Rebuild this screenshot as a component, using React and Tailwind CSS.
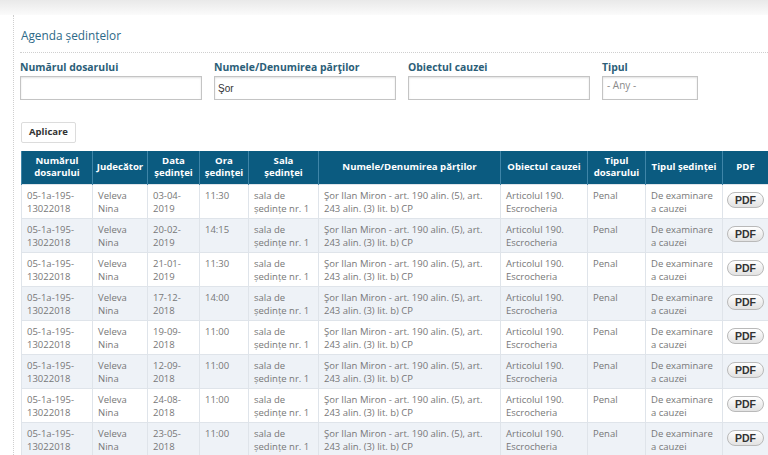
const rows = [
  ["03-04-", "2019", "11:30"],
  ["20-02-", "2019", "14:15"],
  ["21-01-", "2019", "11:30"],
  ["17-12-", "2018", "14:00"],
  ["19-09-", "2018", "11:00"],
  ["12-09-", "2018", "11:00"],
  ["24-08-", "2018", "11:00"],
  ["23-05-", "2018", "11:00"],
];

const headers = [
  ["Numărul", "dosarului"],
  ["Judecător"],
  ["Data", "ședinței"],
  ["Ora", "ședinței"],
  ["Sala", "ședinței"],
  ["Numele/Denumirea părților"],
  ["Obiectul cauzei"],
  ["Tipul", "dosarului"],
  ["Tipul ședinței"],
  ["PDF"],
];

const widths = [71, 55, 52, 49, 70, 182, 87, 58, 77, 46];

const Cell = ({ children }) => (
  <td className="border border-[#dfe4ea] align-top px-[5px] pt-[4px] text-[9.5px] leading-[13px] text-[#777]">
    {children}
  </td>
);

const Field = ({ label, value, width, muted }) => (
  <div className="flex flex-col" style={{ width }}>
    <label className="text-[10.4px] font-bold leading-[14px] text-[#2b5e78] mb-[2px]">{label}</label>
    <div className="h-[24px] border border-[#c4c4c4] bg-white shadow-[inset_0_1px_2px_rgba(0,0,0,0.12)] px-[3px]">
      {muted ? (
        <span className="block pt-[1px] pl-[1px] text-[10px] text-[#8a8a8a]">{value}</span>
      ) : (
        <span className="block pt-[4px] text-[10px] text-[#333] font-['Liberation_Sans',Arial,sans-serif]">{value}</span>
      )}
    </div>
  </div>
);

export default function App() {
  return (
    <div className="w-[768px] h-[455px] overflow-hidden bg-white font-['Open_Sans',sans-serif]">
      <div className="h-[15px] bg-gradient-to-b from-[#e9e9e9] to-[#fbfbfb]" />
      <div className="ml-[13px] border-l border-dotted border-[#cfcfcf] pl-[6px] h-[440px]">
        <h1 className="pt-[12px] pl-[1px] text-[11.8px] leading-[16px] text-[#2d6987]">Agenda ședințelor</h1>
        <div className="mt-[9px] border-t border-dotted border-[#cfcfcf]" />
        <div className="flex gap-[12px] pt-[7px]">
          <Field label="Numărul dosarului" value="" width={182} />
          <Field label="Numele/Denumirea părţilor" value="Şor" width={182} />
          <Field label="Obiectul cauzei" value="" width={182} />
          <Field label="Tipul" value="- Any -" width={96} muted />
        </div>
        <div className="pt-[22px] pl-[1px]">
          <button className="block h-[21px] w-[55px] rounded-[2px] border border-[#dcdcdc] bg-white text-[9.5px] font-bold text-[#333]">
            Aplicare
          </button>
        </div>
        <table className="mt-[8px] ml-[1px] table-fixed border-collapse" style={{ width: 747 }}>
          <colgroup>
            {widths.map((w, i) => (
              <col key={i} style={{ width: w }} />
            ))}
          </colgroup>
          <thead>
            <tr className="h-[33px] bg-[#0b5b80]">
              {headers.map((h, i) => (
                <th key={i} className="border-x border-[#3f85a8] text-center text-[9.6px] leading-[12px] font-bold text-white">
                  {h.map((line, j) => (
                    <div key={j}>{line}</div>
                  ))}
                </th>
              ))}
            </tr>
          </thead>
          <tbody>
            {rows.map((r, i) => (
              <tr key={i} className={`h-[34px] ${i % 2 === 1 ? "bg-[#eef2f7]" : "bg-white"}`}>
                <Cell>05-1a-195-<br />13022018</Cell>
                <Cell>Veleva<br />Nina</Cell>
                <Cell>{r[0]}<br />{r[1]}</Cell>
                <Cell>{r[2]}</Cell>
                <Cell>sala de<br />ședințe nr. 1</Cell>
                <Cell>Şor Ilan Miron - art. 190 alin. (5), art.<br />243 alin. (3) lit. b) CP</Cell>
                <Cell>Articolul 190.<br />Escrocheria</Cell>
                <Cell>Penal</Cell>
                <Cell>De examinare<br />a cauzei</Cell>
                <td className="border border-[#dfe4ea] align-top pl-[4px] pt-[7px]">
                  <button className="block h-[16px] w-[37px] rounded-[8px] border border-[#b9b9b9] bg-gradient-to-b from-white to-[#e2e2e2] text-[10.5px] font-bold leading-[14px] text-[#333] font-['Liberation_Sans',Arial,sans-serif]">
                    PDF
                  </button>
                </td>
              </tr>
            ))}
          </tbody>
        </table>
      </div>
    </div>
  );
}
